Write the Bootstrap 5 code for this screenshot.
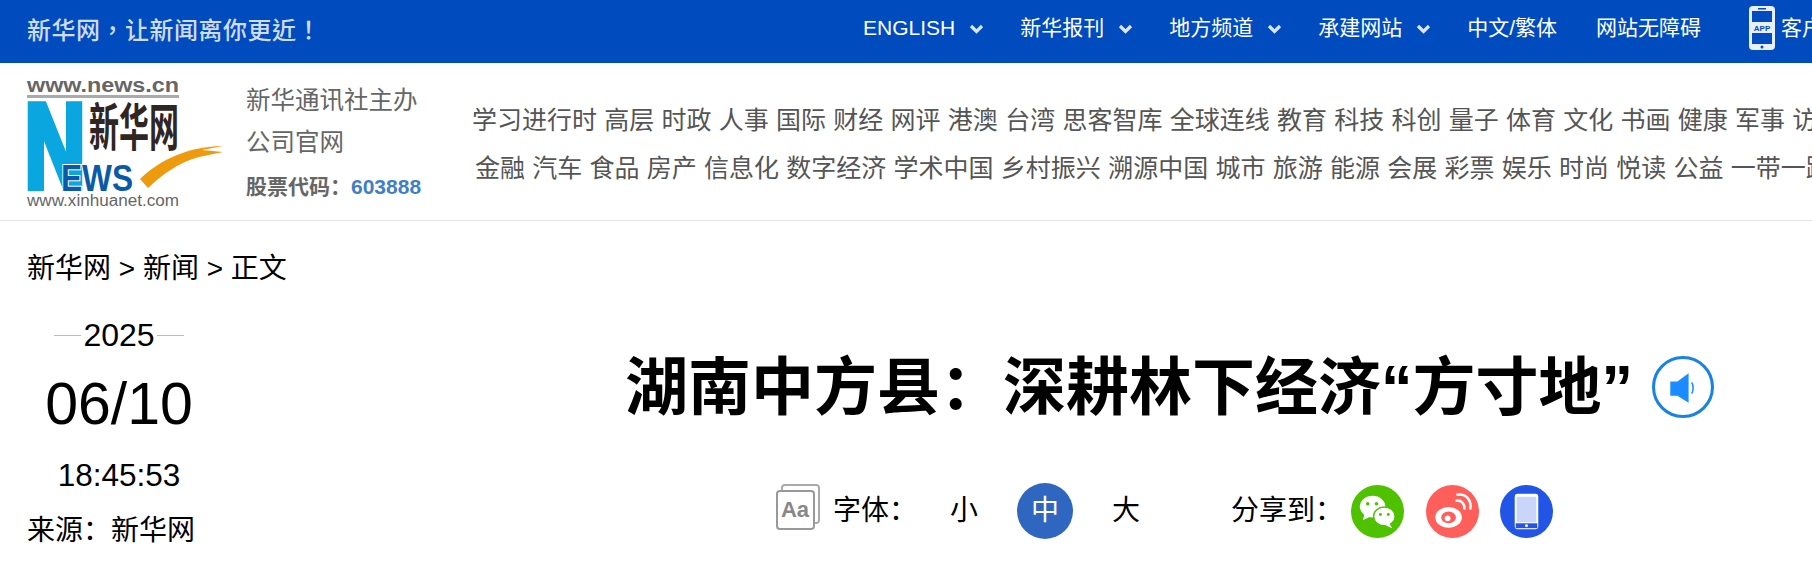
<!DOCTYPE html>
<html lang="zh-CN">
<head>
  <meta charset="UTF-8">
  <meta name="viewport" content="width=device-width, initial-scale=1.0">
  <title>湖南中方县：深耕林下经济“方寸地”</title>
  <link rel="stylesheet" href="https://cdn.jsdelivr.net/npm/bootstrap@5.3.0/dist/css/bootstrap.min.css">
  <style>
    html, body {
      height: 563px;
      overflow: hidden;
    }
    body {
      font-family: "Liberation Sans", "Noto Sans CJK SC", sans-serif;
      color: #000;
      background: #fff;
    }
    a {
      color: inherit;
      text-decoration: none;
    }
    .top-strip {
      height: 63px;
      background: #004bbd;
      padding-left: 27px;
      white-space: nowrap;
      overflow: hidden;
    }
    .top-slogan {
      font-family: "Noto Sans CJK TC", sans-serif;
      font-size: 24px;
      font-weight: 500;
      letter-spacing: .5px;
      color: #d0dcf2;
      width: 836px;
      flex-shrink: 0;
      padding-bottom: 5px;
    }
    .top-links {
      font-size: 21px;
      color: #fff;
      padding-bottom: 8px;
    }
    .top-links a {
      display: flex;
      align-items: center;
    }
    .top-links .arrow {
      margin: 2px 36px 0 14px;
    }
    .top-links .plain {
      margin-right: 39px;
    }
    .top-app {
      margin-left: 8px;
    }
    .top-app svg {
      margin-right: 5px;
    }
    .brand-strip {
      height: 158px;
      border-bottom: 1px solid #e4e4e4;
      padding-left: 19px;
      white-space: nowrap;
      overflow: hidden;
    }
    .brand-note {
      width: 228px;
      margin-left: 18px;
      flex-shrink: 0;
      color: #666;
      font-size: 24.500px;
      line-height: 42px;
      margin-top: 6px;
    }
    .brand-code {
      font-size: 21px;
      font-weight: 700;
      line-height: 45px;
    }
    .brand-code span {
      color: #3f80c4;
    }
    .channels {
      font-size: 25px;
      line-height: 48px;
      color: #555;
      margin-top: 4px;
      margin-left: -2px;
    }
    .channels a {
      margin-right: 7.250px;
    }
    .channels .second {
      padding-left: 3px;
    }
    .crumbs {
      font-size: 28px;
      line-height: 40px;
      padding: 28px 0 0 27px;
    }
    .date-side {
      width: 184px;
      margin-left: 27px;
      flex-shrink: 0;
    }
    .date-year {
      font-size: 32px;
      line-height: 40px;
      margin-top: 26px;
      gap: 2px;
    }
    .date-year i {
      width: 27px;
      height: 1px;
      background: #bbb;
    }
    .date-day {
      font-size: 59px;
      line-height: 66px;
      margin-top: 16px;
    }
    .date-time {
      font-size: 31.500px;
      line-height: 40px;
      margin-top: 18px;
    }
    .date-from {
      font-size: 28px;
      line-height: 40px;
      margin-top: 16px;
    }
    .story {
      padding-left: 414px;
    }
    .story-title {
      font-size: 63px;
      font-weight: 700;
      line-height: 76px;
      margin: 60px 0 0;
      white-space: nowrap;
    }
    .sound-btn {
      width: 62px;
      height: 62px;
      margin: 60px 0 0 19px;
      flex-shrink: 0;
    }
    .story-tools {
      font-size: 28px;
      margin-top: 58px;
      margin-left: 150px;
    }
    .font-icon {
      margin-bottom: 8px;
    }
    .size-pick {
      width: 56px;
      height: 56px;
      border-radius: 50%;
    }
    .pick-first {
      margin-left: 19px;
    }
    .pick-next {
      margin-left: 25px;
    }
    .size-on {
      background: #2f66c0;
      color: #fff;
    }
    .share-label {
      margin: 0 8px 0 77px;
    }
    .share-icon {
      width: 53px;
      height: 53px;
      margin-right: 21.500px;
    }
  </style>
</head>
<body>
  <div class="top-strip d-flex align-items-center">
    <div class="top-slogan" lang="zh-TW">新华网，让新闻离你更近！</div>
    <div class="top-links d-flex align-items-center">
      <a href="#">ENGLISH<svg class="arrow" width="15" height="10" viewBox="0 0 15 10"><path d="M2 2l5.500 5.500L13 2" fill="none" stroke="#dbe6f8" stroke-width="3.200"/></svg></a>
      <a href="#">新华报刊<svg class="arrow" width="15" height="10" viewBox="0 0 15 10"><path d="M2 2l5.500 5.500L13 2" fill="none" stroke="#dbe6f8" stroke-width="3.200"/></svg></a>
      <a href="#">地方频道<svg class="arrow" width="15" height="10" viewBox="0 0 15 10"><path d="M2 2l5.500 5.500L13 2" fill="none" stroke="#dbe6f8" stroke-width="3.200"/></svg></a>
      <a href="#">承建网站<svg class="arrow" width="15" height="10" viewBox="0 0 15 10"><path d="M2 2l5.500 5.500L13 2" fill="none" stroke="#dbe6f8" stroke-width="3.200"/></svg></a>
      <a href="#" class="plain">中文/繁体</a>
      <a href="#" class="plain">网站无障碍</a>
      <a href="#" class="top-app">
        <svg width="28" height="46" viewBox="0 0 28 46">
          <rect x="1" y="1" width="26" height="44" rx="4" fill="#e8eefa"/>
          <rect x="4" y="6" width="20" height="11" fill="#004bbd"/>
          <rect x="4" y="28" width="20" height="11" fill="#004bbd"/>
          <rect x="10" y="3" width="8" height="1.500" fill="#004bbd"/>
          <circle cx="14" cy="42" r="1.500" fill="#004bbd"/>
          <text x="14" y="26" text-anchor="middle" font-size="8" font-weight="700" fill="#004bbd">APP</text>
        </svg>客户端
      </a>
    </div>
  </div>

  <div class="brand-strip d-flex align-items-center">
    <svg width="209" height="134" viewBox="-8 0 209 134" class="flex-shrink-0">
      <text x="0" y="16.500" font-size="20" font-weight="700" fill="#666" textLength="152" lengthAdjust="spacingAndGlyphs">www.news.cn</text>
      <rect x="0" y="20" width="152" height="3" fill="#aaa"/>
      <text x="-2" y="111.500" font-size="118" font-weight="700" fill="#0aa6e0" stroke="#0aa6e0" stroke-width="8" stroke-linejoin="miter" textLength="60" lengthAdjust="spacingAndGlyphs">N</text>
      <text x="34" y="115.500" font-size="37" font-weight="700" fill="#0b5aa8" stroke="#fff" stroke-width="2" paint-order="stroke" textLength="72" lengthAdjust="spacingAndGlyphs">EWS</text>
      <text transform="translate(62 70.500) scale(1 1.700)" font-size="30" font-weight="700" fill="#2f2522">新华网</text>
      <path d="M113 104C130 88 155 72 196 71L175 75 196 77 172 82C150 88 135 100 121 113Z" fill="#ee9a0e"/>
      <text x="0" y="130.500" font-size="16" fill="#666" textLength="152" lengthAdjust="spacingAndGlyphs">www.xinhuanet.com</text>
    </svg>
    <div class="brand-note">
      <div>新华通讯社主办</div>
      <div>公司官网</div>
      <div class="brand-code">股票代码：<span>603888</span></div>
    </div>
    <div class="channels">
      <div>
        <a href="#">学习进行时</a><a href="#">高层</a><a href="#">时政</a><a href="#">人事</a><a href="#">国际</a><a href="#">财经</a><a href="#">网评</a><a href="#">港澳</a><a href="#">台湾</a><a href="#">思客智库</a><a href="#">全球连线</a><a href="#">教育</a><a href="#">科技</a><a href="#">科创</a><a href="#">量子</a><a href="#">体育</a><a href="#">文化</a><a href="#">书画</a><a href="#">健康</a><a href="#">军事</a><a href="#">访谈</a>
      </div>
      <div class="second">
        <a href="#">金融</a><a href="#">汽车</a><a href="#">食品</a><a href="#">房产</a><a href="#">信息化</a><a href="#">数字经济</a><a href="#">学术中国</a><a href="#">乡村振兴</a><a href="#">溯源中国</a><a href="#">城市</a><a href="#">旅游</a><a href="#">能源</a><a href="#">会展</a><a href="#">彩票</a><a href="#">娱乐</a><a href="#">时尚</a><a href="#">悦读</a><a href="#">公益</a><a href="#">一带一路</a>
      </div>
    </div>
  </div>

  <div class="crumbs"><a href="#">新华网</a> &gt; <a href="#">新闻</a> &gt; 正文</div>

  <div class="d-flex">
    <div class="date-side">
      <div class="date-year d-flex align-items-center justify-content-center"><i></i>2025<i></i></div>
      <div class="date-day text-center">06/10</div>
      <div class="date-time text-center">18:45:53</div>
      <div class="date-from">来源：新华网</div>
    </div>
    <div class="story">
      <div class="d-flex align-items-center">
        <h1 class="story-title">湖南中方县：深耕林下经济“方寸地”</h1>
        <svg class="sound-btn" viewBox="0 0 61 61">
          <circle cx="30.500" cy="30.500" r="29" fill="#fff" stroke="#1a82e2" stroke-width="3"/>
          <path d="M18 25h7l11-8v29l-11-7h-7z" fill="#1a8cff"/>
          <path d="M39 26c2 3 2 8 0 11" fill="none" stroke="#1a8cff" stroke-width="1.500"/>
        </svg>
      </div>
      <div class="story-tools d-flex align-items-center">
        <svg width="46" height="46" viewBox="0 0 46 46" class="font-icon me-2">
          <rect x="7" y="1" width="37" height="38" rx="3" fill="#fff" stroke="#aaa" stroke-width="2"/>
          <rect x="2" y="7" width="37" height="38" rx="3" fill="#fff" stroke="#999" stroke-width="2"/>
          <text x="20" y="33" text-anchor="middle" font-size="22" font-weight="700" fill="#888">Aa</text>
        </svg>
        <span class="ms-1">字体：</span>
        <a href="#" class="size-pick pick-first d-flex align-items-center justify-content-center">小</a>
        <a href="#" class="size-pick size-on pick-next d-flex align-items-center justify-content-center">中</a>
        <a href="#" class="size-pick pick-next d-flex align-items-center justify-content-center">大</a>
        <span class="share-label">分享到：</span>
        <svg class="share-icon" viewBox="0 0 54 54">
          <circle cx="27" cy="27" r="27" fill="#4fc200"/>
          <ellipse cx="22" cy="22" rx="13" ry="11" fill="#fff"/>
          <path d="M14 29l-2 7 8-4z" fill="#fff"/>
          <ellipse cx="34" cy="32" rx="11" ry="9.500" fill="#fff" stroke="#4fc200" stroke-width="1.500"/>
          <path d="M39 39l3 5-7-3z" fill="#fff"/>
          <circle cx="17" cy="19" r="1.800" fill="#4fc200"/>
          <circle cx="26" cy="19" r="1.800" fill="#4fc200"/>
          <circle cx="30" cy="30" r="1.500" fill="#4fc200"/>
          <circle cx="38" cy="30" r="1.500" fill="#4fc200"/>
        </svg>
        <svg class="share-icon" viewBox="0 0 54 54">
          <circle cx="27" cy="27" r="27" fill="#ff5f5a"/>
          <ellipse cx="23" cy="33" rx="13.500" ry="10.500" fill="#fff"/>
          <ellipse cx="23" cy="33" rx="7.500" ry="6" fill="#ff5f5a"/>
          <circle cx="22" cy="34" r="3" fill="#fff"/>
          <path d="M30 16c6-1 10 3 9 9M31 10c10-2 16 6 14 15" fill="none" stroke="#fff" stroke-width="2.500"/>
        </svg>
        <svg class="share-icon" viewBox="0 0 54 54">
          <circle cx="27" cy="27" r="27" fill="#2255e6"/>
          <rect x="15" y="9" width="24" height="36" rx="3" fill="#fff"/>
          <rect x="17" y="12" width="20" height="26" fill="#c9d6fa"/>
          <rect x="16" y="39" width="22" height="5" fill="#2255e6"/>
          <circle cx="27" cy="41.500" r="1.500" fill="#fff"/>
        </svg>
      </div>
    </div>
  </div>
  <script src="https://cdn.jsdelivr.net/npm/bootstrap@5.3.0/dist/js/bootstrap.bundle.min.js"></script>
</body>
</html>
